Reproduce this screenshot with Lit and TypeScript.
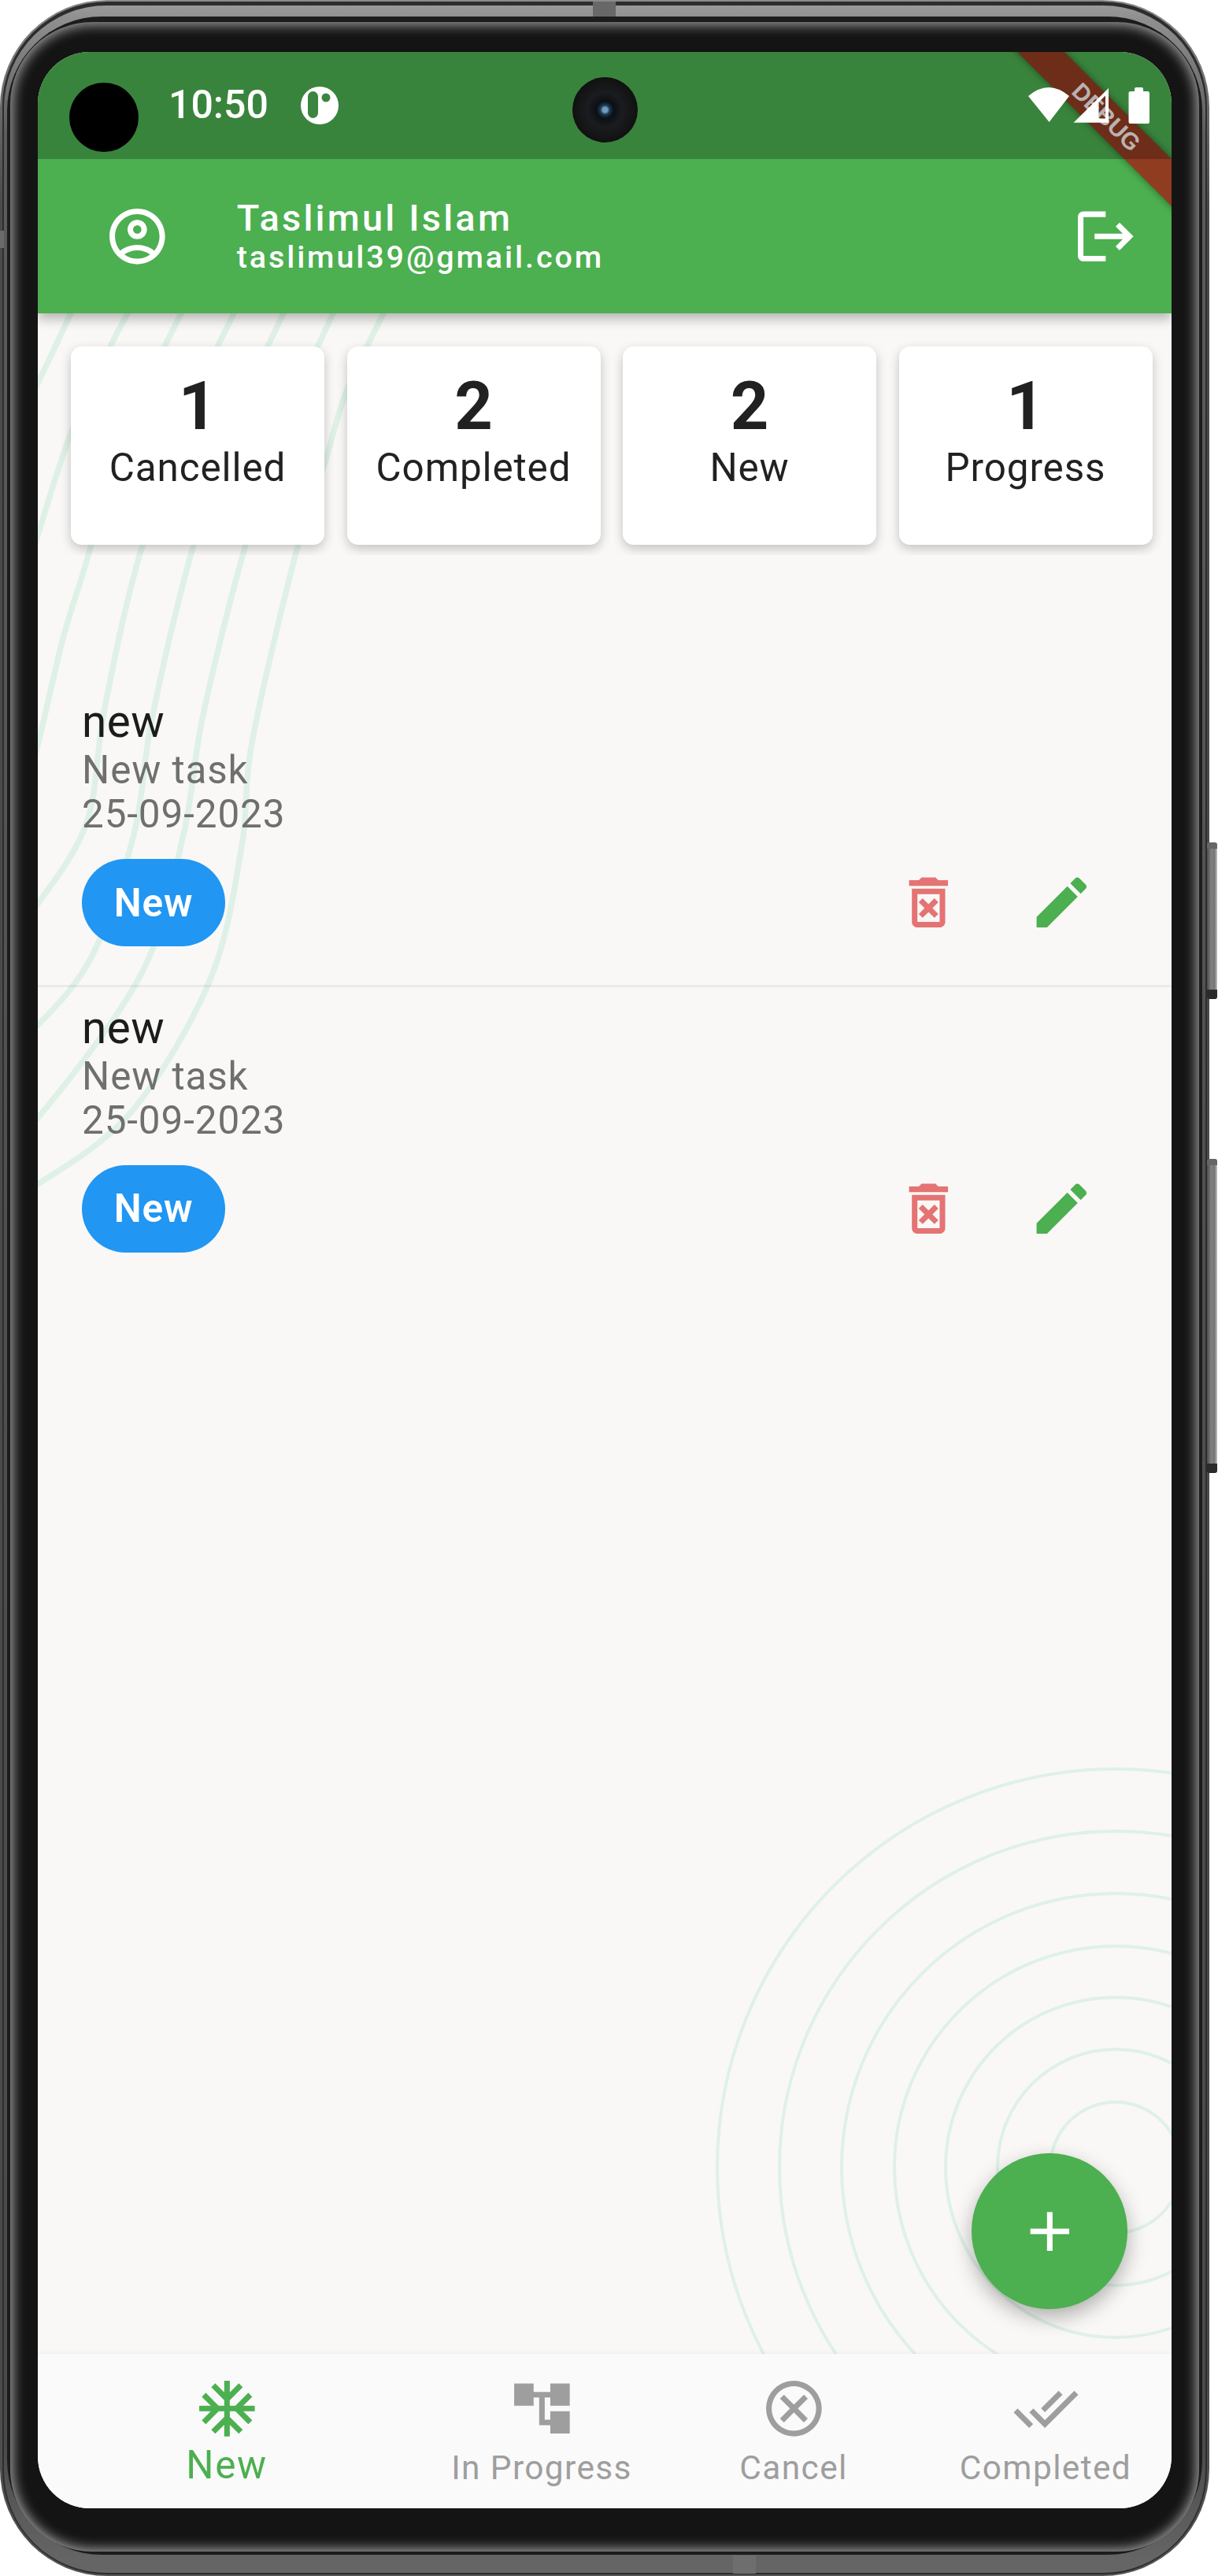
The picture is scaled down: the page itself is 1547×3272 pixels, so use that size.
import { LitElement, html, css, svg } from 'lit'
import { customElement } from 'lit/decorators.js'

// material icon paths, 24 unit grid
const ICONS: Record<string, string> = {
  account:
    'M12 2C6.48 2 2 6.48 2 12s4.48 10 10 10 10-4.48 10-10S17.52 2 12 2zM7.35 18.5C8.66 17.56 10.26 17 12 17s3.34.56 4.65 1.5c-1.31.94-2.91 1.5-4.65 1.5s-3.34-.56-4.65-1.5zm10.79-1.38C16.45 15.8 14.32 15 12 15s-4.45.8-6.14 2.12C4.7 15.73 4 13.95 4 12c0-4.42 3.58-8 8-8s8 3.58 8 8c0 1.95-.7 3.73-1.86 5.12zM12 6c-1.93 0-3.5 1.57-3.5 3.5S10.07 13 12 13s3.5-1.57 3.5-3.5S13.93 6 12 6zm0 5c-.83 0-1.5-.67-1.5-1.5S11.17 8 12 8s1.5.67 1.5 1.5S12.83 11 12 11z',
  logout:
    'M17 7l-1.41 1.41L18.17 11H8v2h10.17l-2.58 2.58L17 17l5-5zM4 5h8V3H4c-1.1 0-2 .9-2 2v14c0 1.1.9 2 2 2h8v-2H4V5z',
  trash:
    'M14.12 10.47L12 12.59l-2.13-2.12-1.41 1.41L10.59 14l-2.12 2.12 1.41 1.41L12 15.41l2.12 2.12 1.41-1.41L13.41 14l2.12-2.12zM15.5 4l-1-1h-5l-1 1H5v2h14V4zM6 19c0 1.1.9 2 2 2h8c1.1 0 2-.9 2-2V7H6v12zM8 9h8v10H8V9z',
  edit: 'M3 17.25V21h3.75L17.81 9.94l-3.75-3.75L3 17.25zM20.71 7.04c.39-.39.39-1.02 0-1.41l-2.34-2.34c-.39-.39-1.02-.39-1.41 0l-1.83 1.83 3.75 3.75 1.83-1.83z',
  add: 'M19 13h-6v6h-2v-6H5v-2h6V5h2v6h6v2z',
  snow: 'M22 11h-4.17l3.24-3.24-1.41-1.42L15 11h-2V9l4.66-4.66-1.42-1.41L13 6.17V2h-2v4.17L7.76 2.93 6.34 4.34 11 9v2H9L4.34 6.34 2.93 7.76 6.17 11H2v2h4.17l-3.24 3.24 1.41 1.42L9 13h2v2l-4.66 4.66 1.42 1.41L11 17.83V22h2v-4.17l3.24 3.24 1.42-1.41L13 15v-2h2l4.66 4.66 1.41-1.42L17.83 13H22z',
  tree: 'M22 11V3h-7v3H9V3H2v8h7V8h2v10h4v3h7v-8h-7v3h-2V8h2v3z',
  cancel:
    'M12 2C6.47 2 2 6.47 2 12s4.47 10 10 10 10-4.47 10-10S17.53 2 12 2zm0 18c-4.41 0-8-3.59-8-8s3.59-8 8-8 8 3.59 8 8-3.59 8-8 8zm3.59-13L12 10.59 8.41 7 7 8.41 10.59 12 7 15.59 8.41 17 12 13.41 15.59 17 17 15.59 13.41 12 17 8.41z',
  done: 'M18 7l-1.41-1.41-6.34 6.34 1.41 1.41L18 7zm4.24-1.41L11.66 16.17 7.48 12l-1.41 1.41L11.66 19l12-12-1.42-1.41zM.41 13.41L6 19l1.41-1.41L1.83 12 .41 13.41z',
}

const SUMMARY = [
  { count: 1, label: 'Cancelled' },
  { count: 2, label: 'Completed' },
  { count: 2, label: 'New' },
  { count: 1, label: 'Progress' },
]

const TASKS = [
  { title: 'new', text: 'New task', date: '25-09-2023', status: 'New' },
  { title: 'new', text: 'New task', date: '25-09-2023', status: 'New' },
]

const TABS = [
  { icon: 'snow', label: 'New', active: true },
  { icon: 'tree', label: 'In Progress', active: false },
  { icon: 'cancel', label: 'Cancel', active: false },
  { icon: 'done', label: 'Completed', active: false },
]

// background art, in page coordinates
const WAVES: number[][][] = [
  [[110, 355], [90, 398], [48, 487], [20, 545]],
  [[182, 355], [162, 398], [140, 440], [90, 550], [48, 680], [30, 740]],
  [[250, 355], [230, 398], [190, 480], [140, 600], [112, 706], [80, 811], [48, 946], [30, 1000]],
  [[317, 355], [297, 398], [245, 510], [177, 706], [133, 899], [110, 1045], [48, 1148], [10, 1190]],
  [[380, 355], [360, 398], [300, 530], [242, 706], [193, 913], [170, 1060], [117, 1214], [48, 1302], [10, 1325]],
  [[443, 355], [423, 398], [360, 540], [308, 706], [257, 913], [233, 1060], [180, 1236], [48, 1420], [10, 1440]],
  [[507, 355], [487, 398], [440, 497], [412, 590], [375, 706], [320, 943], [307, 1075], [267, 1244], [167, 1412], [48, 1504], [10, 1515]],
]
const RINGS = [506, 427, 348, 281, 216, 150, 83]

function smooth(points: number[][]) {
  let d = `M${points[0][0]} ${points[0][1]}`
  for (let i = 0; i < points.length - 1; i++) {
    const p0 = points[Math.max(i - 1, 0)]
    const p1 = points[i]
    const p2 = points[i + 1]
    const p3 = points[Math.min(i + 2, points.length - 1)]
    const c1x = p1[0] + (p2[0] - p0[0]) / 6
    const c1y = p1[1] + (p2[1] - p0[1]) / 6
    const c2x = p2[0] - (p3[0] - p1[0]) / 6
    const c2y = p2[1] - (p3[1] - p1[1]) / 6
    d += `C${c1x} ${c1y} ${c2x} ${c2y} ${p2[0]} ${p2[1]}`
  }
  return d
}

function icon(name: string, cls: string) {
  return html`<svg class="icon ${cls}" viewBox="0 0 24 24" fill="currentColor"><path d=${ICONS[name]} /></svg>`
}

@customElement('app-root')
export class AppRoot extends LitElement {
  static styles = css`
    :host {
      display: block;
      width: 1547px;
      height: 3272px;
      background: #fff;
      font-family: Roboto, 'Liberation Sans', sans-serif;
      position: relative;
      overflow: hidden;
    }
    .device {
      box-sizing: border-box;
      width: 1536px;
      height: 3272px;
      border-radius: 136px;
      padding: 2px 3px;
      background: linear-gradient(#8a8a8a, #4a4a4a 8%, #4a4a4a 92%, #555);
      position: relative;
    }
    .edge {
      height: 100%;
      box-sizing: border-box;
      border-radius: 133px;
      padding: 5px 2px 2px;
      background: #2d2d2d;
    }
    .band {
      height: 100%;
      box-sizing: border-box;
      border-radius: 130px;
      padding: 14px 4px 23px;
      background: linear-gradient(#9a9a9a, #8f8f8f 0.5%, #5c5c5c 5%, #4f4f4f 50%, #4a4a4a 95%, #656565 99.5%);
    }
    .rim {
      height: 100%;
      box-sizing: border-box;
      border-radius: 120px;
      padding: 7px 4px 4px;
      background: #1c1c1c;
    }
    .bezel {
      height: 100%;
      box-sizing: border-box;
      border-radius: 104px;
      padding: 38px 35px 55px;
      background: #141414;
      box-shadow: inset 0 0 16px 3px #a8a8a8;
    }
    .screen {
      height: 3120px;
      border-radius: 66px;
      overflow: hidden;
      position: relative;
      display: flex;
      flex-direction: column;
      background: #f9f8f6;
    }
    .notch-top {
      position: absolute;
      left: 753px;
      top: 2px;
      width: 29px;
      height: 19px;
      background: #686868;
    }
    .notch-bottom {
      position: absolute;
      left: 931px;
      top: 3246px;
      width: 29px;
      height: 23px;
      background: #6e6e6e;
    }
    .side-mark {
      position: absolute;
      left: 0;
      top: 293px;
      width: 5px;
      height: 22px;
      background: #6a6a6a;
    }
    .side-btn {
      position: absolute;
      left: 1533px;
      width: 13px;
      border-radius: 3px;
      background: linear-gradient(90deg, #4a4a4a, #808080 40%, #777 75%, #c4c4c4);
      border-top: 8px solid #666;
      border-bottom: 12px solid #2b2b2b;
      box-sizing: border-box;
    }
    .btn-a {
      top: 1070px;
      height: 199px;
    }
    .btn-b {
      top: 1472px;
      height: 399px;
    }

    .icon {
      display: block;
      width: 84.7px;
      height: 84.7px;
      flex: none;
    }

    header {
      flex: none;
      box-sizing: border-box;
      height: 332px;
      padding: 136px 0 0 84px;
      display: flex;
      align-items: center;
      background: #4caf50;
      color: #fff;
      box-shadow: 0 7px 14px rgba(0, 0, 0, 0.28);
      position: relative;
      z-index: 1;
    }
    .who {
      margin-left: 84px;
      flex: 1;
      padding-bottom: 1px;
    }
    .name {
      font-size: 47px;
      font-weight: 500;
      letter-spacing: 3.2px;
      line-height: 54px;
    }
    .email {
      font-size: 39.5px;
      font-weight: 500;
      letter-spacing: 2.9px;
      line-height: 46px;
    }
    .logout {
      margin-right: 41px;
    }

    .body {
      flex: 1;
      min-height: 0;
      position: relative;
    }
    .art {
      position: absolute;
      left: 0;
      top: 0;
      width: 1440px;
      height: 2592px;
    }
    .art path,
    .art circle {
      fill: none;
      stroke: #dff1e6;
    }
    .summary {
      position: relative;
      display: flex;
      gap: 28.5px;
      padding: 42px 0 13px 42px;
      overflow: hidden;
    }
    .card {
      flex: none;
      box-sizing: border-box;
      width: 322px;
      height: 252px;
      padding-top: 28px;
      border-radius: 14px;
      background: #fff;
      box-shadow: 0 5px 14px rgba(0, 0, 0, 0.22);
      text-align: center;
      color: #212121;
    }
    .count {
      font-size: 84.7px;
      font-weight: 700;
      line-height: 96px;
    }
    .label {
      font-size: 49.4px;
      letter-spacing: 0.9px;
      line-height: 60px;
    }

    .tasks {
      position: relative;
      padding-top: 160px;
    }
    .task {
      box-sizing: border-box;
      height: 388.5px;
      padding: 19px 97px 0 56px;
      border-bottom: 3px solid rgba(0, 0, 0, 0.055);
    }
    .task:last-child {
      border-bottom: none;
    }
    .title {
      font-size: 56.5px;
      line-height: 66px;
      letter-spacing: 0.5px;
      color: #1c1c1c;
    }
    .sub {
      font-size: 49.4px;
      line-height: 56px;
      letter-spacing: 0.9px;
      color: #6f706d;
    }
    .row {
      display: flex;
      align-items: center;
      margin-top: 29px;
    }
    .chip {
      width: 182px;
      height: 111px;
      border-radius: 56px;
      display: flex;
      align-items: center;
      justify-content: center;
      background: #2196f3;
      color: #fff;
      font-size: 49.4px;
      font-weight: 600;
      letter-spacing: 0.9px;
    }
    .actions {
      margin-left: auto;
      display: flex;
      gap: 84.3px;
    }
    .red {
      color: #e57373;
    }
    .green {
      color: #4caf50;
    }

    .fab {
      position: absolute;
      right: 56px;
      bottom: 57px;
      width: 197.6px;
      height: 197.6px;
      border-radius: 50%;
      background: #4caf50;
      color: #fff;
      display: flex;
      align-items: center;
      justify-content: center;
      box-shadow: 0 10px 26px rgba(0, 0, 0, 0.3);
    }

    nav {
      flex: none;
      box-sizing: border-box;
      height: 196px;
      display: grid;
      grid-template-columns: 480px 320px 320px 320px;
      background: #fafafa;
      box-shadow: 0 -2px 6px rgba(0, 0, 0, 0.04);
      position: relative;
      color: #9e9e9e;
    }
    .tab {
      display: flex;
      flex-direction: column;
      align-items: center;
      padding-top: 27.4px;
      font-size: 42.4px;
      letter-spacing: 1.4px;
      line-height: 50px;
    }
    .tab span {
      margin-top: 7.6px;
    }
    .tab.active {
      color: #4caf50;
      font-size: 49.4px;
      letter-spacing: 1.6px;
    }
    .tab.active span {
      margin-top: 4px;
    }

    .banner {
      position: absolute;
      left: 1107px;
      top: 62px;
      width: 500px;
      height: 42px;
      transform: rotate(45deg);
      display: flex;
      align-items: center;
      justify-content: center;
      background: rgba(170, 15, 15, 0.72);
      box-shadow: 0 0 10px rgba(0, 0, 0, 0.45);
      color: rgba(255, 255, 255, 0.92);
      font-family: 'Liberation Sans', Arial, sans-serif;
      font-size: 30px;
      font-weight: 700;
      z-index: 2;
    }
    .status {
      position: absolute;
      left: 0;
      top: 0;
      right: 0;
      box-sizing: border-box;
      height: 136px;
      padding: 39px 23px 0 166px;
      display: flex;
      align-items: flex-start;
      background: rgba(0, 0, 0, 0.245);
      color: #fff;
      z-index: 3;
    }
    .time {
      font-size: 50px;
      font-weight: 500;
      line-height: 58px;
      margin-top: -1px;
    }
    .app-badge {
      width: 48px;
      height: 48px;
      margin: 5px 0 0 41px;
    }
    .sys {
      width: 165px;
      height: 55px;
      margin-left: auto;
    }
    .hole {
      position: absolute;
      left: 40px;
      top: 39px;
      width: 88px;
      height: 88px;
      border-radius: 50%;
      background: #000;
      z-index: 4;
    }
    .camera {
      position: absolute;
      left: 679px;
      top: 32px;
      width: 83px;
      height: 83px;
      border-radius: 50%;
      background: radial-gradient(circle, #6f9dbd 0 3px, #1b3a52 6px, #0c0f13 11px, #1a1c1f 22px, #111 41px);
      z-index: 4;
    }
  `

  private renderArt() {
    return svg`
      ${WAVES.map((w) => svg`<path d=${smooth(w)} stroke-width="7.5" />`)}
      ${RINGS.map((r) => svg`<circle cx="1417" cy="2753" r=${r} stroke-width="4" />`)}
    `
  }

  render() {
    return html`
      <div class="device">
        <div class="edge">
          <div class="band">
            <div class="rim">
              <div class="bezel">
                <div class="screen">
                  <header>
                    ${icon('account', '')}
                    <div class="who">
                      <div class="name">Taslimul Islam</div>
                      <div class="email">taslimul39@gmail.com</div>
                    </div>
                    ${icon('logout', 'logout')}
                  </header>

                  <div class="body">
                    <svg class="art" viewBox="48 398 1440 2592">${this.renderArt()}</svg>
                    <div class="summary">
                      ${SUMMARY.map(
                        (s) => html`
                          <div class="card">
                            <div class="count">${s.count}</div>
                            <div class="label">${s.label}</div>
                          </div>
                        `,
                      )}
                    </div>
                    <div class="tasks">
                      ${TASKS.map(
                        (t) => html`
                          <div class="task">
                            <div class="title">${t.title}</div>
                            <div class="sub">${t.text}</div>
                            <div class="sub">${t.date}</div>
                            <div class="row">
                              <div class="chip">${t.status}</div>
                              <div class="actions">${icon('trash', 'red')} ${icon('edit', 'green')}</div>
                            </div>
                          </div>
                        `,
                      )}
                    </div>
                    <div class="fab">${icon('add', '')}</div>
                  </div>

                  <nav>
                    ${TABS.map(
                      (t) => html`
                        <div class="tab ${t.active ? 'active' : ''}">
                          ${icon(t.icon, '')}
                          <span>${t.label}</span>
                        </div>
                      `,
                    )}
                  </nav>

                  <div class="banner">DEBUG</div>
                  <div class="status">
                    <div class="time">10:50</div>
                    <svg class="app-badge" viewBox="0 0 48 48">
                      <circle cx="24" cy="24" r="24" fill="#fff" />
                      <rect x="9" y="6" width="13" height="34" rx="6.5" fill="#3c8540" />
                      <circle cx="32" cy="14" r="5.5" fill="#3c8540" />
                    </svg>
                    <svg class="sys" viewBox="1300 105 165 55" fill="#fff">
                      <path d="M1306 122Q1332 100 1358 122L1332.6 155z" />
                      <path
                        fill-rule="evenodd"
                        d="M1363.6 155.7L1408 112v43.7zM1395.5 150.5h8.5V121.5l-8.5 8.3z"
                      />
                      <path d="M1441 116v-3a2 2 0 0 1 2-2h7a2 2 0 0 1 2 2v3h5.5a2.5 2.5 0 0 1 2.5 2.5V154.500a2.500 2.500 0 0 1-2.500 2.500H1436a2.500 2.500 0 0 1-2.500-2.500V118.500a2.500 2.500 0 0 1 2.500-2.500z" />
                    </svg>
                  </div>
                  <div class="hole"></div>
                  <div class="camera"></div>
                </div>
              </div>
            </div>
          </div>
        </div>
        <div class="notch-top"></div>
        <div class="notch-bottom"></div>
        <div class="side-mark"></div>
      </div>
      <div class="side-btn btn-a"></div>
      <div class="side-btn btn-b"></div>
    `
  }
}
